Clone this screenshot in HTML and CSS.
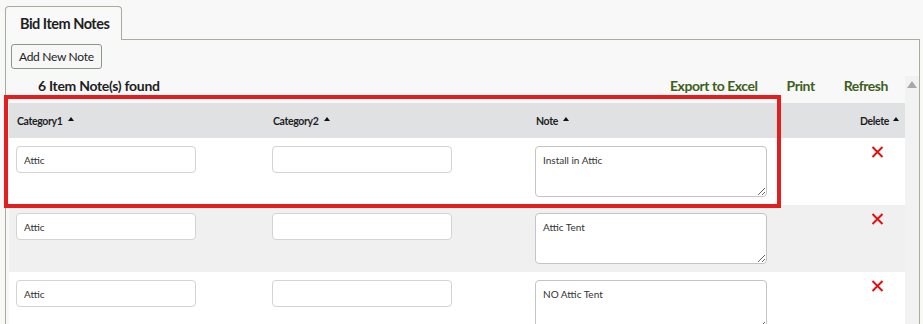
FILE: index.html
```html
<!DOCTYPE html>
<html>
<head>
<meta charset="utf-8">
<link rel="stylesheet" href="styles.css">
</head>
<body>
<div class="tabs">
  <div class="tab">Bid Item Notes</div>
</div>
<div class="panel">
  <div class="btn-row"><button class="btn">Add New Note</button></div>
  <div class="main">
    <div class="content">
      <div class="toolbar">
        <span class="count">6 Item Note(s) found</span>
        <span class="links">
          <a class="link">Export to Excel</a>
          <a class="link">Print</a>
          <a class="link">Refresh</a>
        </span>
      </div>
      <div class="grid">
        <div class="hcell">Category1 <span class="arrow"></span></div>
        <div class="hcell">Category2 <span class="arrow"></span></div>
        <div class="hcell">Note <span class="arrow"></span></div>
        <div class="hcell hdel">Delete <span class="arrow"></span></div>

        <div class="cell"><input class="inp" value="Attic"></div>
        <div class="cell"><input class="inp" value=""></div>
        <div class="cell"><textarea class="ta">Install in Attic</textarea></div>
        <div class="cell del"><svg class="x" viewBox="0 0 12 12"><path d="M1 1L11 11M11 1L1 11"/></svg></div>

        <div class="cell alt"><input class="inp" value="Attic"></div>
        <div class="cell alt"><input class="inp" value=""></div>
        <div class="cell alt"><textarea class="ta">Attic Tent</textarea></div>
        <div class="cell alt del"><svg class="x" viewBox="0 0 12 12"><path d="M1 1L11 11M11 1L1 11"/></svg></div>

        <div class="cell"><input class="inp" value="Attic"></div>
        <div class="cell"><input class="inp" value=""></div>
        <div class="cell"><textarea class="ta">NO Attic Tent</textarea></div>
        <div class="cell del"><svg class="x" viewBox="0 0 12 12"><path d="M1 1L11 11M11 1L1 11"/></svg></div>
      </div>
    </div>
    <div class="scroll"><span class="up"></span></div>
  </div>
</div>
<div class="highlight"></div>
</body>
</html>
```
FILE: styles.css
```css
* { box-sizing: border-box; }
html, body { margin: 0; padding: 0; }
body {
  background: #f8f8f8;
  font-family: Lato, "Noto Sans", sans-serif;
  color: #1e1e1e;
  position: relative;
  height: 324px;
  overflow: hidden;
}
.tabs {
  padding: 6px 0 0 5px;
  display: flex;
}
.tab {
  width: 117px;
  height: 34px;
  border: 1px solid #a3ae9b;
  border-bottom: none;
  border-radius: 4px 4px 0 0;
  background: #f9f9f9;
  font-weight: bold;
  font-size: 14.5px;
  letter-spacing: -0.5px;
  white-space: nowrap;
  padding: 8px 0 0 14px;
  margin-bottom: -1px;
  position: relative;
  z-index: 1;
}
.panel {
  margin: 0 3px 0 5px;
  border: 1px solid #a3ae9b;
  border-bottom: none;
  padding: 4px 0 0 0;
  height: 300px;
}
.btn-row { padding-left: 5px; }
.btn {
  font-family: inherit;
  font-size: 12px;
  letter-spacing: -0.3px;
  color: #222;
  background: #f7f7f7;
  border: 1px solid #8d9987;
  border-radius: 3px;
  height: 25px;
  padding: 0 7px;
}
.main {
  display: flex;
  margin-top: 7px;
}
.content { flex: 1; }
.toolbar {
  display: flex;
  justify-content: space-between;
  align-items: center;
  height: 19px;
  padding: 0 17px 0 32px;
  margin-bottom: 8px;
}
.count { font-weight: bold; font-size: 14px; letter-spacing: -0.3px; white-space: nowrap; }
.links { display: flex; gap: 29px; }
.link {
  color: #3d5f1c;
  font-size: 14px;
  letter-spacing: -0.45px;
  font-weight: bold;
  white-space: nowrap;
}
.grid {
  margin-left: 3px;
  display: grid;
  grid-template-columns: 256px 263px 1fr 90px;
}
.hcell {
  background: #e0e1e3;
  height: 35px;
  padding: 0 8px;
  display: flex;
  align-items: center;
  font-size: 10.5px;
  letter-spacing: -0.35px;
  font-weight: bold;
  gap: 5px;
}
.hdel { justify-content: flex-end; padding-right: 6px; gap: 4px; }
.arrow {
  width: 0; height: 0;
  border-left: 3px solid transparent;
  border-right: 3px solid transparent;
  border-bottom: 4px solid #111;
  margin-bottom: 3px;
}
.cell {
  background: #fff;
  height: 67px;
  padding: 8px 7px;
}
.cell.alt { background: #f0f0f0; }
.inp {
  display: block;
  width: 180px;
  height: 27px;
  border: 1px solid #d3d3d3;
  border-radius: 4px;
  background: #fff;
  font-family: inherit;
  font-size: 10px;
  color: #333;
  padding: 0 7px;
}
.ta {
  display: block;
  width: 232px;
  height: 51px;
  border: 1px solid #c4c4c4;
  border-radius: 4px;
  background: #fff;
  font-family: inherit;
  font-size: 10px;
  color: #333;
  padding: 7px 7px;
  resize: vertical;
}
.del { display: flex; justify-content: flex-end; padding-right: 21px; padding-top: 8px; }
.x { width: 13px; height: 12px; }
.x path { stroke: #e01010; stroke-width: 2; fill: none; }
.scroll {
  width: 14px;
  background: #f2f2f2;
  padding-top: 5px;
  display: flex;
  justify-content: center;
}
.up {
  width: 0; height: 0;
  border-left: 5px solid transparent;
  border-right: 5px solid transparent;
  border-bottom: 7px solid #a8a8a8;
}
.highlight {
  position: absolute;
  left: 4px;
  top: 95px;
  width: 777px;
  height: 113px;
  border: 4px solid #e41e1e;
  pointer-events: none;
}
```
